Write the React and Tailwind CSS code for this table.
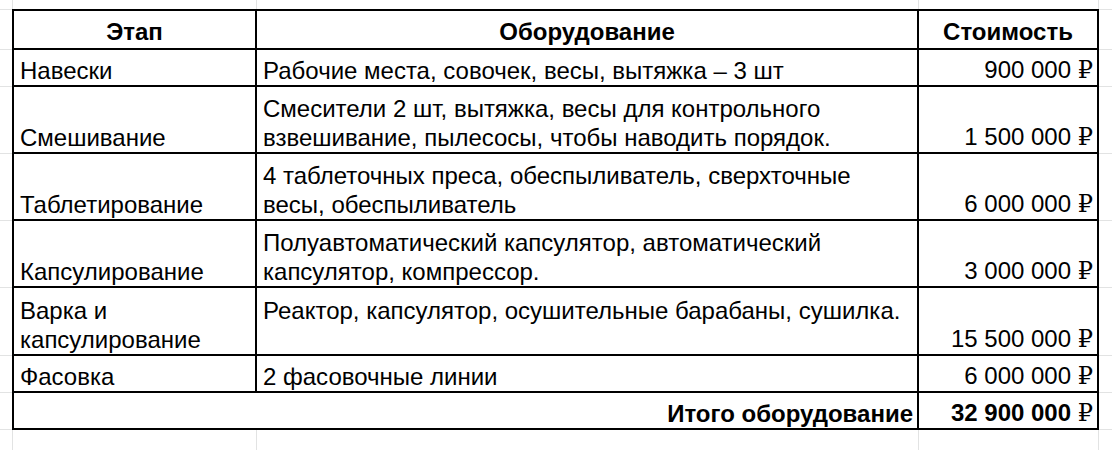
import React from "react";

const G = "border-[#e2e3e3]";

const rows = [
  { h: "h-[37px]", stage: ["Навески"], eq: ["Рабочие места, совочек, весы, вытяжка – 3 шт"], cost: "900 000" },
  { h: "h-[67px]", stage: ["Смешивание"], eq: ["Смесители 2 шт, вытяжка, весы для контрольного", "взвешивание, пылесосы, чтобы наводить порядок."], cost: "1 500 000" },
  { h: "h-[67px]", stage: ["Таблетирование"], eq: ["4 таблеточных преса, обеспыливатель, сверхточные", "весы, обеспыливатель"], cost: "6 000 000" },
  { h: "h-[67px]", stage: ["Капсулирование"], eq: ["Полуавтоматический капсулятор, автоматический", "капсулятор, компрессор."], cost: "3 000 000" },
  { h: "h-[68px]", stage: ["Варка и", "капсулирование"], eq: ["Реактор, капсулятор, осушительные барабаны, сушилка.", "\u00a0"], cost: "15 500 000" },
  { h: "h-[37px]", stage: ["Фасовка"], eq: ["2 фасовочные линии"], cost: "6 000 000" },
];

function Lines({ lines }) {
  return lines.map((l, i) => <div key={i}>{l}</div>);
}

function Rub() {
  return (
    <span className="font-normal" style={{ fontFamily: '"Liberation Serif", "DejaVu Serif", serif' }}>
      ₽
    </span>
  );
}

function Row({ h, children }) {
  return (
    <div className={`flex ${h}`}>
      <div className={`w-[12px] shrink-0 border-b ${G}`}></div>
      {children}
      <div className={`flex-1 border-b ${G}`}></div>
    </div>
  );
}

export default function App() {
  return (
    <div
      className="w-[1112px] h-[450px] overflow-hidden bg-white text-black text-[24px] leading-[29px]"
      style={{ fontFamily: '"Liberation Sans", Arial, sans-serif' }}
    >
      {/* top partial grid row */}
      <div className={`flex h-[10px] border-b ${G}`}>
        <div className={`w-[13px] shrink-0 border-r ${G}`}></div>
        <div className={`w-[244px] shrink-0 border-r ${G}`}></div>
        <div className={`w-[662px] shrink-0 border-r ${G}`}></div>
        <div className={`w-[180px] shrink-0 border-r ${G}`}></div>
        <div className="flex-1"></div>
      </div>

      {/* header */}
      <div className="flex h-[41px] -mt-px">
        <div className={`w-[12px] shrink-0 border-b ${G}`}></div>
        <div className="w-[245px] shrink-0 border-2 border-black flex items-end justify-center pb-[2px] font-bold">Этап</div>
        <div className="w-[662px] shrink-0 border-t-2 border-r-2 border-b-2 border-black flex items-end justify-center pb-[2px] font-bold">Оборудование</div>
        <div className="w-[180px] shrink-0 border-t-2 border-r-2 border-b-2 border-black flex items-end justify-center pb-[2px] font-bold">Стоимость</div>
        <div className={`flex-1 border-b ${G}`}></div>
      </div>

      {rows.map((r, i) => (
        <Row key={i} h={r.h}>
          <div className="w-[245px] shrink-0 border-l-2 border-r-2 border-b-2 border-black flex flex-col justify-end pl-[6px] whitespace-nowrap">
            <Lines lines={r.stage} />
          </div>
          <div className="w-[662px] shrink-0 border-r-2 border-b-2 border-black flex flex-col justify-end pl-[6px] whitespace-nowrap">
            <Lines lines={r.eq} />
          </div>
          <div className="w-[180px] shrink-0 border-r-2 border-b-2 border-black flex flex-col justify-end items-end pr-[4px] whitespace-nowrap">
            <div>
              {r.cost} <Rub />
            </div>
          </div>
        </Row>
      ))}

      {/* total */}
      <Row h="h-[37px]">
        <div className="w-[907px] shrink-0 border-l-2 border-r-2 border-b-2 border-black flex items-end justify-end pr-[4px] font-bold">
          Итого оборудование
        </div>
        <div className="w-[180px] shrink-0 border-r-2 border-b-2 border-black flex items-end justify-end pr-[4px] font-bold whitespace-nowrap">
          <div>
            32 900 000 <Rub />
          </div>
        </div>
      </Row>

      {/* bottom partial grid row */}
      <div className="flex h-[40px]">
        <div className={`w-[13px] shrink-0 border-r ${G}`}></div>
        <div className={`w-[244px] shrink-0 border-r ${G}`}></div>
        <div className={`w-[662px] shrink-0 border-r ${G}`}></div>
        <div className={`w-[180px] shrink-0 border-r ${G}`}></div>
        <div className="flex-1"></div>
      </div>
    </div>
  );
}
